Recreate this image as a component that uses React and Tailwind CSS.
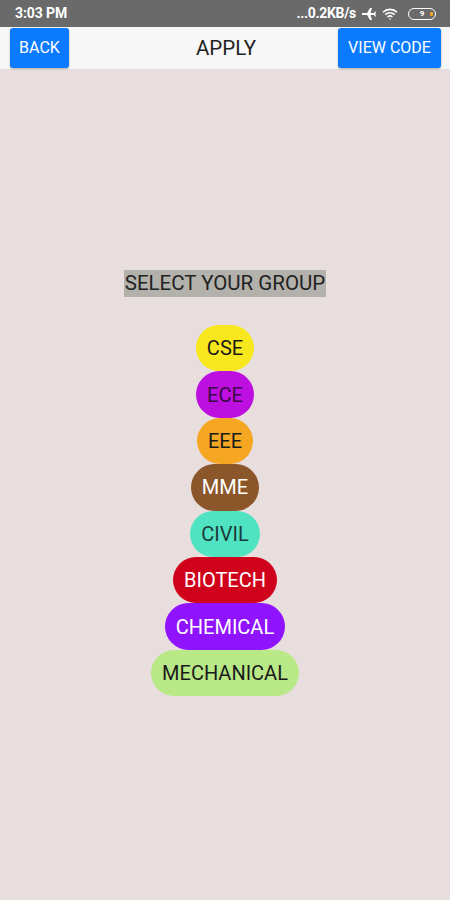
import React from "react";

const groups = [
  { name: "CSE", bg: "bg-[#f8e71c]", fg: "text-[#1a1a1a]" },
  { name: "ECE", bg: "bg-[#bd10e0]", fg: "text-[#3a0a45]" },
  { name: "EEE", bg: "bg-[#f5a623]", fg: "text-[#1a1a1a]" },
  { name: "MME", bg: "bg-[#8b572a]", fg: "text-white" },
  { name: "CIVIL", bg: "bg-[#50e3c2]", fg: "text-[#1a3a3a]" },
  { name: "BIOTECH", bg: "bg-[#d0021b]", fg: "text-white" },
  { name: "CHEMICAL", bg: "bg-[#9013fe]", fg: "text-white" },
  { name: "MECHANICAL", bg: "bg-[#b8e986]", fg: "text-[#1a1a1a]" },
];

export default function App() {
  return (
    <div
      className="w-[450px] h-[900px] flex flex-col bg-[#e9dede] overflow-hidden"
      style={{ fontFamily: "Roboto, 'Liberation Sans', sans-serif" }}
    >
      {/* status bar */}
      <div className="h-[27px] bg-[#6a6a6a] flex items-center justify-between pl-[15px] pr-[14px] text-white">
        <span className="text-[14px] font-bold tracking-[-0.1px]">3:03 PM</span>
        <div className="flex items-center gap-[6px]">
          <span className="text-[14px] font-bold tracking-[-0.3px]">...0.2KB/s</span>
          <svg width="14" height="12" viewBox="0 0 14 12" fill="white">
            <path d="M0 5h5L8 0h2L8.5 5H12l1.2-1.6h0.8L13.3 6l0.7 2.6h-0.8L12 7H8.5L10 12H8L5 7H0z" />
          </svg>
          <svg width="16" height="12" viewBox="0 0 16 12" fill="none" stroke="white" strokeWidth="1.6">
            <path d="M1 4.2a10 10 0 0 1 14 0" />
            <path d="M3.3 6.6a6.8 6.8 0 0 1 9.4 0" />
            <path d="M5.6 9a3.5 3.5 0 0 1 4.8 0" />
            <circle cx="8" cy="11" r="0.8" fill="white" stroke="none" />
          </svg>
          <div className="relative ml-[4px] w-[28px] h-[12px] rounded-[6px] border border-white flex items-center justify-center">
            <span className="text-[8px] leading-none font-bold">9</span>
            <div className="absolute right-[2px] top-[3px] w-[3px] h-[4px] rounded-[1px] bg-[#f5a623]" />
          </div>
        </div>
      </div>

      {/* header */}
      <div className="h-[42px] bg-[#f7f7f7] grid grid-cols-[1fr_auto_1fr] items-stretch pl-[10px] pr-[9px] pt-[1px] pb-[1px]">
        <div className="flex">
          <button className="w-[59px] bg-[#0a7aff] rounded-[3px] text-white text-[16px] flex items-center justify-center shadow-[0_1px_2px_rgba(0,0,0,0.3)]">
            BACK
          </button>
        </div>
        <div className="flex items-center text-[20.5px] text-[#222] pl-[1px]">APPLY</div>
        <div className="flex justify-end">
          <button className="w-[103px] bg-[#0a7aff] rounded-[3px] text-white text-[16px] flex items-center justify-center shadow-[0_1px_2px_rgba(0,0,0,0.3)]">
            VIEW CODE
          </button>
        </div>
      </div>

      {/* content */}
      <div className="flex flex-col items-center pt-[201px]">
        <div className="h-[27px] px-[1px] bg-[#b3b1ab] text-[20.5px] text-[#222] flex items-center leading-none">
          SELECT YOUR GROUP
        </div>
        <div className="flex flex-col items-center mt-[28px]">
          {groups.map((g) => (
            <div
              key={g.name}
              className={`h-[46.4px] px-[11px] rounded-full flex items-center justify-center text-[20px] ${g.bg} ${g.fg}`}
            >
              {g.name}
            </div>
          ))}
        </div>
      </div>
    </div>
  );
}
